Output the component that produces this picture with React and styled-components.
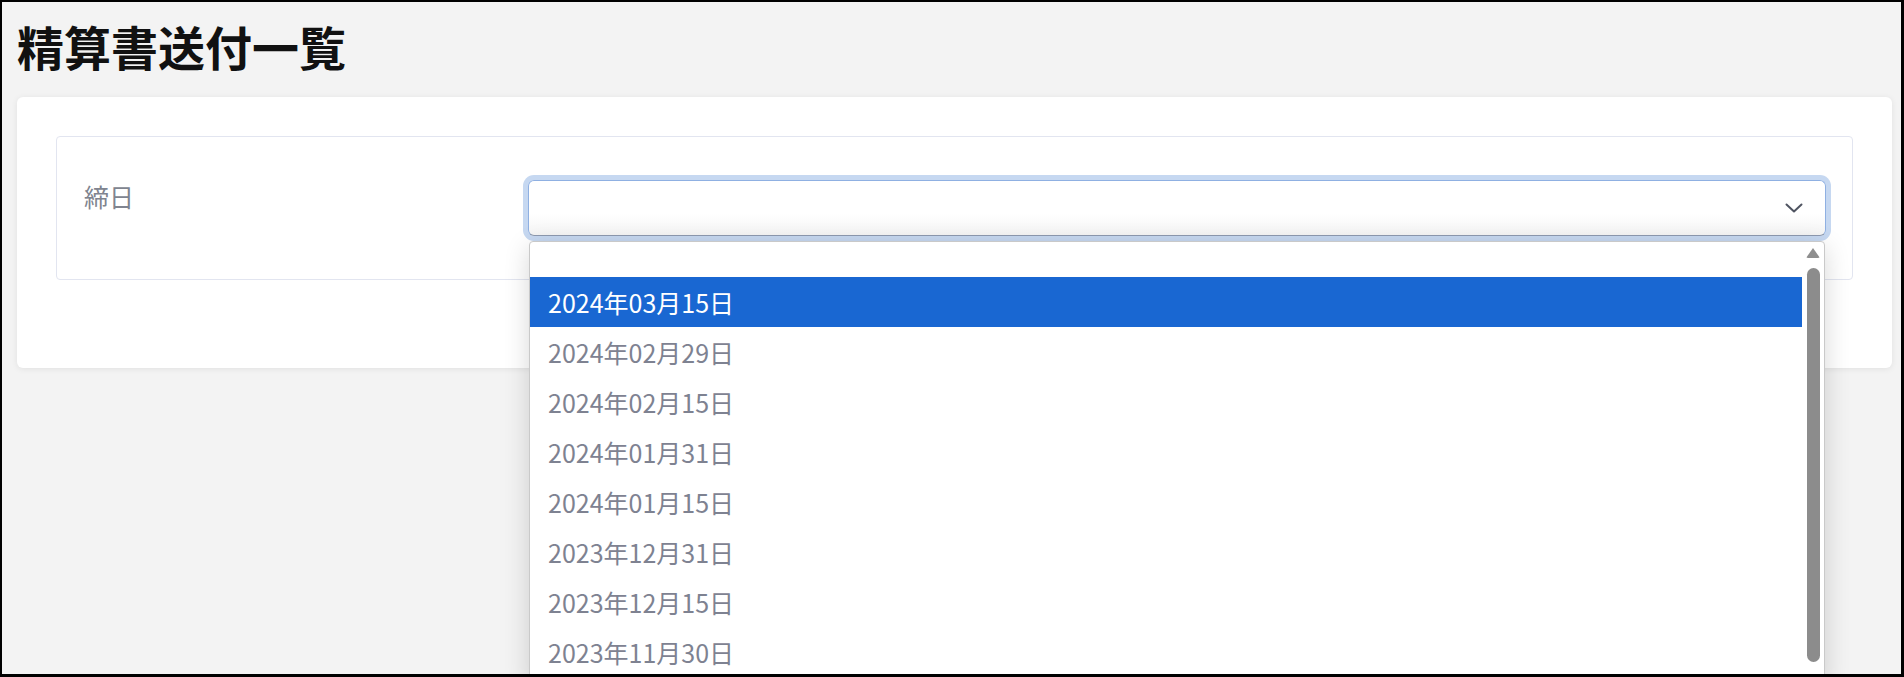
import React from 'react';
import styled, {createGlobalStyle} from 'styled-components';

const GlobalStyle = createGlobalStyle`
  body {
    margin: 0;
    font-family: "Noto Sans CJK JP", "Noto Sans", sans-serif;
  }
`

const dates = [
    '2024年03月15日',
    '2024年02月29日',
    '2024年02月15日',
    '2024年01月31日',
    '2024年01月15日',
    '2023年12月31日',
    '2023年12月15日',
    '2023年11月30日',
]

const ChevronDown = () => (
    <svg width="18" height="10" viewBox="0 0 18 10">
        <polyline points="1.5,1.5 9,8.5 16.5,1.5" fill="none" stroke="#4f5461" strokeWidth="2"
                  strokeLinecap="round" strokeLinejoin="round"/>
    </svg>
)

const App = () => {
    return (
        <>
            <GlobalStyle/>
            <Frame>
                <Title>精算書送付一覧</Title>
                <Card>
                    <SearchBox>
                        <Label>締日</Label>
                        <SelectWrap>
                            <SelectBox>
                                <ChevronDown/>
                            </SelectBox>
                            <DropList>
                                <Options>
                                    <Option/>
                                    {
                                        dates.map((date, i) => (
                                            <Option key={date} selected={i === 0}>{date}</Option>
                                        ))
                                    }
                                </Options>
                                <ScrollTrack>
                                    <ScrollArrow/>
                                    <ScrollThumb/>
                                </ScrollTrack>
                            </DropList>
                        </SelectWrap>
                    </SearchBox>
                </Card>
            </Frame>
        </>
    )
}

const Frame = styled.div`
  width: 1904px;
  height: 677px;
  box-sizing: border-box;
  border: solid #000;
  border-width: 2px 3px 3px 2px;
  background: #f3f3f3;
  padding: 0 9px 0 15px;
  overflow: hidden;
`
const Title = styled.h1`
  margin: 0;
  padding-top: 20px;
  margin-bottom: 28px;
  font-size: 47px;
  line-height: 47px;
  font-weight: 700;
  color: #111;
`
const Card = styled.div`
  background: #fff;
  border-radius: 6px;
  box-shadow: 0 1px 6px rgba(0, 0, 0, 0.08);
  padding: 39px 39px 88px;
`
const SearchBox = styled.div`
  display: grid;
  grid-template-columns: 444px 1fr;
  align-items: start;
  border: 1px solid #e2e5f0;
  border-radius: 4px;
  padding: 43px 26px 43px 27px;
`
const Label = styled.div`
  font-size: 25px;
  line-height: 32px;
  color: #80848f;
`
const SelectWrap = styled.div`
  position: relative;
`
const SelectBox = styled.div`
  height: 56px;
  box-sizing: border-box;
  border: 1px solid #8fb0e2;
  border-bottom-color: #8d9ab0;
  border-radius: 6px;
  background: linear-gradient(#fff 60%, #f4f4f4);
  box-shadow: 0 0 0 5px #c6d8f1;
  display: flex;
  align-items: center;
  justify-content: flex-end;
  padding-right: 22px;
`
const DropList = styled.div`
  position: absolute;
  top: calc(100% + 5px);
  left: 1px;
  right: 1px;
  height: 440px;
  display: flex;
  background: #fff;
  border: 1px solid #c9c9c9;
  border-radius: 4px 4px 0 0;
  box-shadow: 0 6px 26px rgba(0, 0, 0, 0.16);
  overflow: hidden;
`
const Options = styled.div`
  flex: 1;
  margin-top: -15px;
`
const Option = styled.div`
  height: 50px;
  line-height: 50px;
  padding-left: 18px;
  font-size: 25px;
  color: ${({selected}) => selected ? '#fff' : '#7e8291'};
  background: ${({selected}) => selected ? '#1967d2' : 'transparent'};
`
const ScrollTrack = styled.div`
  width: 22px;
  display: flex;
  flex-direction: column;
  align-items: center;
  padding-top: 6px;
`
const ScrollArrow = styled.div`
  width: 0;
  height: 0;
  border-left: 7px solid transparent;
  border-right: 7px solid transparent;
  border-bottom: 10px solid #8e8e8e;
  border-radius: 2px;
  margin-bottom: 10px;
`
const ScrollThumb = styled.div`
  width: 13px;
  height: 394px;
  border-radius: 7px;
  background: #8c8c8c;
`

export default App;
